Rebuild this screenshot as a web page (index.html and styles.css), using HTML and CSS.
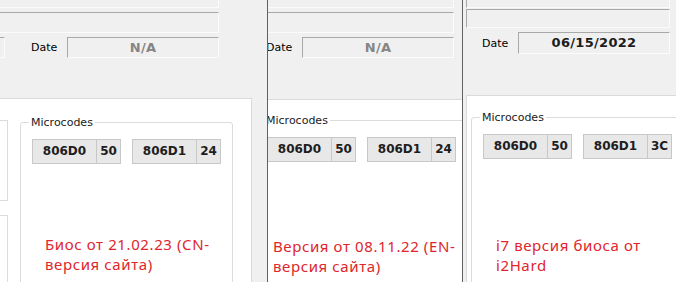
FILE: index.html
```html
<!DOCTYPE html>
<html lang="ru">
<head>
  <meta charset="UTF-8">
  <meta name="viewport" content="width=device-width, initial-scale=1.0">
  <title>Microcodes: сравнение BIOS</title>
  <link rel="stylesheet" href="styles.css">
</head>
<body>
  <div class="strip">
    <!-- CN build -->
    <section class="shot shot-cn">
      <div class="win">
        <div class="edit edit-top"></div>
        <div class="edit edit-row"></div>
        <div class="date-row">
          <div class="edit edit-stub"></div>
          <span class="date-label">Date</span>
          <div class="edit edit-date na">N/A</div>
        </div>
        <div class="sheet">
          <div class="side">
            <div class="side-box"></div>
            <div class="side-box side-box-low"></div>
          </div>
          <fieldset class="group">
            <legend>Microcodes</legend>
            <div class="codes">
              <div class="code"><span class="cpuid">806D0</span><span class="rev">50</span></div>
              <div class="code"><span class="cpuid">806D1</span><span class="rev">24</span></div>
            </div>
            <p class="note">Биос от 21.02.23 (CN-<br>версия сайта)</p>
          </fieldset>
        </div>
      </div>
    </section>

    <!-- EN build -->
    <section class="shot shot-en">
      <div class="win">
        <div class="edit edit-top"></div>
        <div class="edit edit-row"></div>
        <div class="date-row">
          <div class="edit edit-stub"></div>
          <span class="date-label">Date</span>
          <div class="edit edit-date na">N/A</div>
        </div>
        <div class="sheet">
          <div class="side">
            <div class="side-box"></div>
            <div class="side-box side-box-low"></div>
          </div>
          <fieldset class="group">
            <legend>Microcodes</legend>
            <div class="codes">
              <div class="code"><span class="cpuid">806D0</span><span class="rev">50</span></div>
              <div class="code"><span class="cpuid">806D1</span><span class="rev">24</span></div>
            </div>
            <p class="note">Версия от 08.11.22 (EN-<br>версия сайта)</p>
          </fieldset>
        </div>
      </div>
    </section>

    <!-- i2Hard build -->
    <section class="shot shot-i2">
      <div class="win">
        <div class="edit edit-top"></div>
        <div class="edit edit-row"></div>
        <div class="date-row">
          <div class="edit edit-stub"></div>
          <span class="date-label">Date</span>
          <div class="edit edit-date">06/15/2022</div>
        </div>
        <div class="sheet">
          <fieldset class="group">
            <legend>Microcodes</legend>
            <div class="codes">
              <div class="code"><span class="cpuid">806D0</span><span class="rev">50</span></div>
              <div class="code"><span class="cpuid">806D1</span><span class="rev">3C</span></div>
            </div>
            <p class="note">i7 версия биоса от<br>i2Hard</p>
          </fieldset>
        </div>
      </div>
    </section>
  </div>
</body>
</html>
```

FILE: styles.css
```css
* { margin: 0; padding: 0; box-sizing: border-box; }
body { background-color: #f0f0f0; color: #000; font-family: 'DejaVu Sans', Verdana, sans-serif; font-size: 11px; width: 676px; height: 282px; overflow: hidden; }

.strip { display: flex; height: 282px; overflow: hidden; }
.shot { flex: none; height: 282px; overflow: hidden; background-color: #f0f0f0; }
.shot-cn { width: 267px; }
.shot-en { width: 196px; border-left: 1px solid #616161; border-right: 1px solid #616161; }
.shot-i2 { width: 213px; }

.win { width: 320px; }
.shot-en .win { margin: -4px 0 0 -33px; }
.shot-i2 .win { margin-left: -12px; }

/* sunken edit boxes */
.edit { border: 1px solid; border-color: #a8a8a8 #fbfbfb #fbfbfb #a8a8a8; background-color: #f0f0f0; }
.edit-top { width: 239px; height: 20px; margin: -12px 0 0 -20px; }
.edit-row { width: 239px; height: 21px; margin: 4px 0 0 -20px; }
.date-row { display: flex; align-items: center; height: 21px; margin-top: 4px; }
.edit-stub { width: 25px; height: 21px; margin-left: -20px; }
.date-label { width: 36px; margin-left: 26px; }
.edit-date { width: 152px; height: 21px; text-align: center; font-weight: bold; font-size: 13px; letter-spacing: 0.3px; line-height: 19px; color: #1c1c1c; }
.edit-date.na { color: #858585; }

.shot-i2 .edit-top,
.shot-i2 .edit-row { width: 204px; margin-left: 15px; }
.shot-i2 .edit-row { height: 19px; margin-top: 1px; }
.shot-i2 .date-row { height: 22px; }
.shot-i2 .edit-date { height: 22px; line-height: 20px; }

/* white tab sheet */
.sheet { display: flex; align-items: flex-start; width: 272px; height: 200px; margin: 40px 0 0 -20px; background-color: #fff; border-top: 1px solid #dadada; border-right: 1px solid #dadada; }
.shot-en .sheet { margin-top: 41px; }
.shot-i2 .sheet { margin: 41px 0 0 15px; width: 300px; border-left: 1px solid #dadada; }

.side { width: 28px; flex: none; }
.side-box { height: 81px; margin-top: 21px; border: 1px solid #dcdcdc; border-left: none; }
.side-box-low { height: 100px; margin-top: 14px; }

.group { flex: none; width: 213px; min-width: 0; height: 220px; margin: 17px 0 0 12px; padding: 10px 11px 0; border: 1px solid #dcdcdc; border-radius: 3px; }
.group legend { margin-left: -3px; padding: 0 2px; font-size: 11px; line-height: 13px; color: #1a1a1a; }
.shot-en .group { margin-top: 14px; }
.shot-i2 .group { margin: 15px 0 0 4px; }

.codes { display: flex; gap: 11px; }
.code { display: flex; height: 25px; border: 1px solid #c8c8c8; background-color: #e8e8e8; font-weight: bold; font-size: 12px; line-height: 23px; color: #1e1e1e; }
.cpuid { width: 63px; text-align: center; }
.rev { width: 24px; border-left: 1px solid #c8c8c8; text-align: center; }

/* red captions */
.note { margin: 70px 0 0 13px; font-family: 'Noto Sans', 'Open Sans', sans-serif; font-size: 15px; letter-spacing: 0.6px; line-height: 20px; color: #e0252b; white-space: nowrap; }
.shot-en .note { margin: 74px 0 0 6px; }
.shot-i2 .note { margin-top: 76px; }
```
